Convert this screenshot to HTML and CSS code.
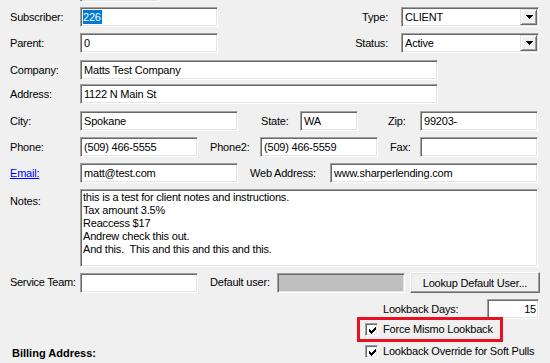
FILE: index.html
```html
<!DOCTYPE html>
<html>
<head>
<meta charset="utf-8">
<link rel="stylesheet" href="styles.css">
</head>
<body>
<div class="form">
  <div class="stub sunken"></div>

  <div class="row r1">
    <div class="lbl">Subscriber:</div>
    <div class="fld sunken w138"><span class="sel">226</span></div>
    <div class="rlbl w183">Type:</div>
    <div class="combo sunken w138">CLIENT<span class="arrow"><svg width="7" height="4" viewBox="0 0 7 4" shape-rendering="crispEdges"><polygon points="0,0 7,0 4,4 3,4" fill="#000"/></svg></span></div>
  </div>

  <div class="row r2">
    <div class="lbl">Parent:</div>
    <div class="fld sunken w138">0</div>
    <div class="rlbl w183">Status:</div>
    <div class="combo sunken w138">Active<span class="arrow"><svg width="7" height="4" viewBox="0 0 7 4" shape-rendering="crispEdges"><polygon points="0,0 7,0 4,4 3,4" fill="#000"/></svg></span></div>
  </div>

  <div class="row r3">
    <div class="lbl">Company:</div>
    <div class="fld sunken w358">Matts Test Company</div>
  </div>

  <div class="row r4">
    <div class="lbl">Address:</div>
    <div class="fld sunken w358">1122 N Main St</div>
  </div>

  <div class="row r5">
    <div class="lbl">City:</div>
    <div class="fld sunken w158">Spokane</div>
    <div class="mlbl state">State:</div>
    <div class="fld sunken w58">WA</div>
    <div class="mlbl zip">Zip:</div>
    <div class="fld sunken w118">99203-</div>
  </div>

  <div class="row r6">
    <div class="lbl">Phone:</div>
    <div class="fld sunken w118">(509) 466-5555</div>
    <div class="mlbl phone2">Phone2:</div>
    <div class="fld sunken w118">(509) 466-5559</div>
    <div class="mlbl fax">Fax:</div>
    <div class="fld sunken w118"></div>
  </div>

  <div class="row r7">
    <div class="lbl"><a class="link" href="#">Email:</a></div>
    <div class="fld sunken w158">matt@test.com</div>
    <div class="mlbl web">Web Address:</div>
    <div class="fld sunken w208">www.sharperlending.com</div>
  </div>

  <div class="row notes-row">
    <div class="lbl notes-lbl">Notes:</div>
    <div class="notes sunken">this is a test for client notes and instructions.<br>Tax amount 3.5%<br>Reaccess $17<br>Andrew check this out.<br>And this.&nbsp; This and this and this and this.</div>
  </div>

  <div class="row service-row">
    <div class="lbl service-lbl">Service Team:</div>
    <div class="fld sunken w118 svc"></div>
    <div class="mlbl defuser">Default user:</div>
    <div class="disabled sunken"></div>
    <div class="btn">Lookup Default User...</div>
  </div>

  <div class="row lookback-row">
    <div class="lb-lbl">Lookback Days:</div>
    <div class="fld sunken lb-fld">15</div>
  </div>

  <div class="row mismo-row">
    <div class="highlight">
      <span class="chk"><svg width="9" height="9" viewBox="0 0 9 9" shape-rendering="crispEdges"><g fill="#000"><rect x="1" y="3" width="1" height="3"/><rect x="2" y="4" width="1" height="3"/><rect x="3" y="5" width="1" height="3"/><rect x="4" y="4" width="1" height="3"/><rect x="5" y="3" width="1" height="3"/><rect x="6" y="2" width="1" height="3"/><rect x="7" y="1" width="1" height="3"/></g></svg></span>
      <span class="chk-text">Force Mismo Lookback</span>
    </div>
  </div>

  <div class="row last-row">
    <div class="billing">Billing Address:</div>
    <div class="override">
      <span class="chk"><svg width="9" height="9" viewBox="0 0 9 9" shape-rendering="crispEdges"><g fill="#000"><rect x="1" y="3" width="1" height="3"/><rect x="2" y="4" width="1" height="3"/><rect x="3" y="5" width="1" height="3"/><rect x="4" y="4" width="1" height="3"/><rect x="5" y="3" width="1" height="3"/><rect x="6" y="2" width="1" height="3"/><rect x="7" y="1" width="1" height="3"/></g></svg></span>
      <span class="chk-text">Lookback Override for Soft Pulls</span>
    </div>
  </div>
</div>
</body>
</html>
```

FILE: styles.css
```css
html, body {
  margin: 0;
  padding: 0;
  background: #f0f0f0;
}
body {
  width: 550px;
  height: 363px;
  overflow: hidden;
  font-family: "Liberation Sans", Arial, sans-serif;
  font-size: 11px;
  letter-spacing: -0.2px;
  color: #000;
}
.form {
  padding-left: 10px;
  width: 540px;
}
.sunken {
  box-sizing: border-box;
  background: #fff;
  border: 1px solid;
  border-color: #a0a0a0 #fff #fff #a0a0a0;
  box-shadow: inset 1px 1px 0 #696969, inset -1px -1px 0 #e3e3e3;
}
.stub {
  margin-left: 70px;
  width: 79px;
  height: 20px;
  margin-top: -18px;
}
.row {
  display: flex;
  align-items: center;
  height: 20px;
  line-height: 13px;
}
.r1 { margin-top: 5px; }
.r2 { margin-top: 6px; }
.r3 { margin-top: 7px; }
.r4 { margin-top: 4px; }
.r5 { margin-top: 7px; }
.r6 { margin-top: 6px; }
.r7 { margin-top: 6px; }
.lbl {
  width: 70px;
  flex: none;
  white-space: nowrap;
}
.fld {
  height: 20px;
  padding: 2px 3px 0 3px;
  flex: none;
  white-space: nowrap;
  overflow: hidden;
  line-height: 14px;
}
.w58 { width: 58px; }
.w118 { width: 118px; }
.w138 { width: 138px; }
.w158 { width: 158px; }
.w183 { width: 183px; }
.w208 { width: 208px; }
.w358 { width: 358px; }
.sel {
  background: #0078d7;
  color: #fff;
  display: inline-block;
  line-height: 14px;
  padding: 0 1px 0 0;
  margin-left: -1px;
}
.rlbl {
  flex: none;
  box-sizing: border-box;
  text-align: right;
  padding-right: 13px;
}
.combo {
  position: relative;
  height: 20px;
  flex: none;
  padding: 2px 3px 0 3px;
  line-height: 14px;
}
.arrow {
  position: absolute;
  right: 1px;
  top: 1px;
  width: 17px;
  height: 16px;
  box-sizing: border-box;
  background: #f0f0f0;
  border: 1px solid;
  border-color: #e3e3e3 #696969 #696969 #e3e3e3;
  box-shadow: inset 1px 1px 0 #fff, inset -1px -1px 0 #a0a0a0;
  display: flex;
  align-items: center;
  justify-content: center;
}
.arrow svg { display: block; margin-left: 1px; }
.mlbl {
  flex: none;
  box-sizing: border-box;
  white-space: nowrap;
}
.state { width: 62px; padding-left: 23px; }
.zip { width: 62px; padding-left: 30px; }
.phone2 { width: 62px; padding-left: 12px; }
.fax { width: 42px; padding-left: 12px; }
.web { width: 92px; padding-left: 12px; }
.defuser { width: 79px; padding-left: 12px; }
.link {
  color: #0000ff;
  text-decoration: underline;
}
.notes-row {
  margin-top: 6px;
  height: 78px;
  align-items: flex-start;
}
.notes-lbl { padding-top: 6px; }
.notes {
  width: 458px;
  height: 78px;
  padding: 1px 2px;
  line-height: 13px;
  white-space: nowrap;
}
.service-row {
  margin-top: 5px;
  height: 21px;
  align-items: flex-start;
}
.service-lbl { padding-top: 4px; letter-spacing: -0.3px; }
.svc { margin-top: 1px; }
.defuser { padding-top: 4px; }
.disabled {
  width: 128px;
  height: 20px;
  margin-top: 1px;
  background: #bfbfbf;
  flex: none;
}
.btn {
  margin-left: 5px;
  width: 130px;
  height: 21px;
  box-sizing: border-box;
  background: #f0f0f0;
  border: 1px solid;
  border-color: #fff #696969 #696969 #fff;
  box-shadow: inset -1px -1px 0 #a0a0a0, inset 1px 1px 0 #e3e3e3;
  display: flex;
  align-items: center;
  justify-content: center;
  flex: none;
  padding-top: 1px;
}
.lookback-row {
  margin-top: 6px;
}
.lb-lbl {
  margin-left: 373px;
  width: 104px;
  flex: none;
}
.lb-fld {
  width: 52px;
  text-align: right;
  padding-right: 2px;
}
.mismo-row {
  margin-top: -2px;
  height: 25px;
}
.highlight {
  margin-left: 347px;
  width: 146px;
  height: 25px;
  box-sizing: border-box;
  border: 3px solid #e81123;
  display: flex;
  align-items: center;
  padding-left: 5px;
}
.chk {
  width: 13px;
  height: 13px;
  box-sizing: border-box;
  background: #fff;
  border: 1px solid;
  border-color: #a0a0a0 #fff #fff #a0a0a0;
  box-shadow: inset 1px 1px 0 #696969, inset -1px -1px 0 #e3e3e3;
  display: flex;
  align-items: center;
  justify-content: center;
  flex: none;
}
.chk svg { display: block; margin: 1px 0 0 1px; }
.chk-text {
  margin-left: 5px;
  white-space: nowrap;
}
.last-row {
  margin-top: 2px;
  height: 19px;
  align-items: flex-start;
}
.billing {
  font-weight: bold;
  width: 355px;
  flex: none;
  padding-left: 2px;
  box-sizing: border-box;
  margin-top: 3px;
  white-space: nowrap;
  letter-spacing: 0;
}
.override {
  display: flex;
  align-items: center;
  margin-top: 1px;
}
```
